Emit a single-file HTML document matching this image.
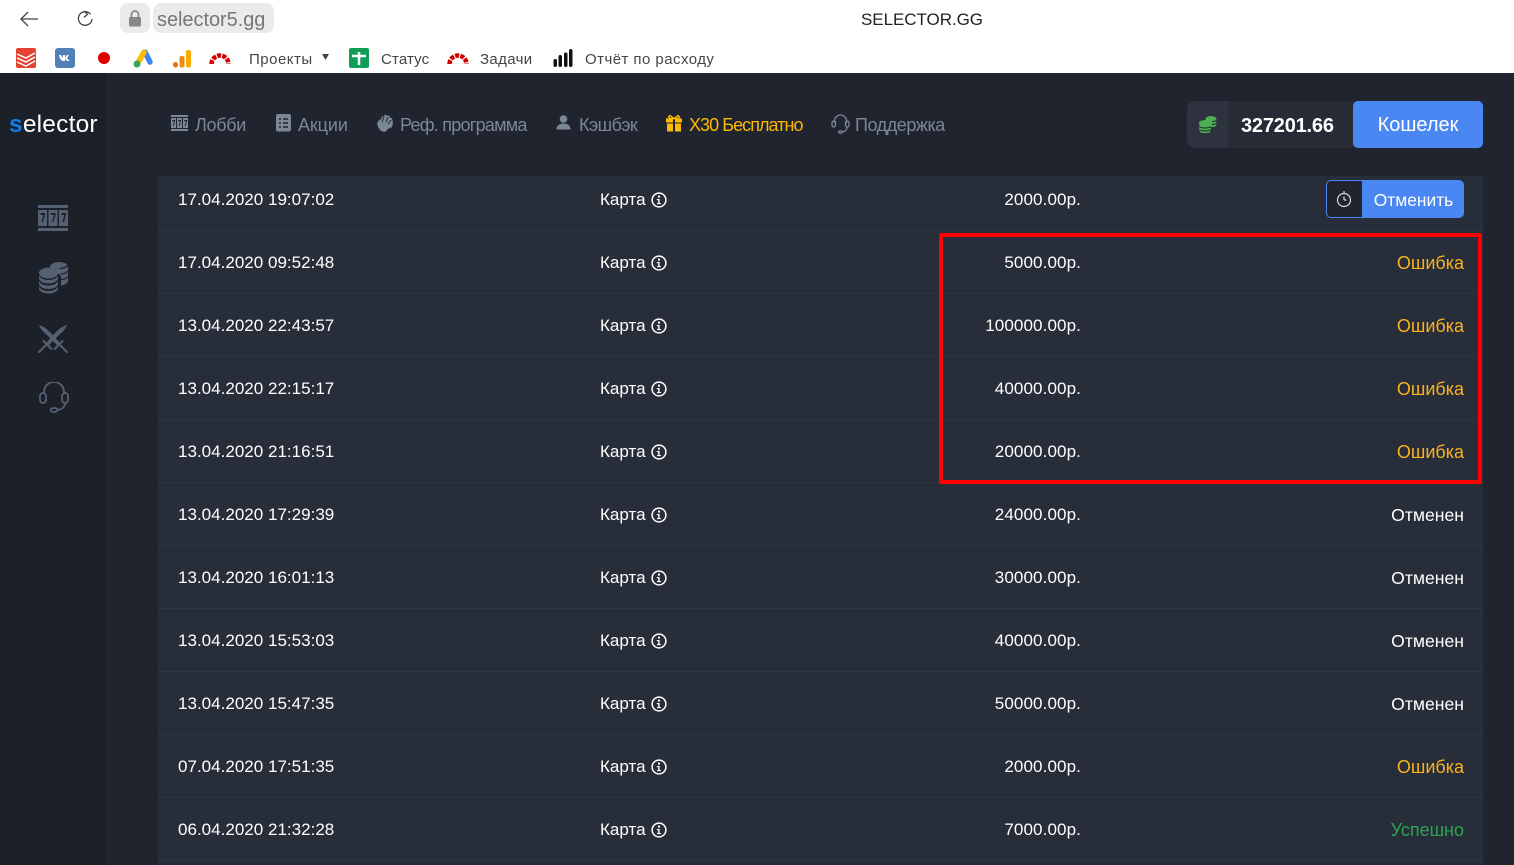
<!DOCTYPE html>
<html><head><meta charset="utf-8"><style>
html,body{margin:0;padding:0}
body{width:1514px;height:865px;overflow:hidden;position:relative;background:#20242e;font-family:"Liberation Sans",sans-serif}
.a{position:absolute;white-space:nowrap}
.top{left:0;top:0;width:1514px;height:73px;background:#fff}
.side{left:0;top:73px;width:106px;height:792px;background:#1c2029}
.bm{font-size:15px;color:#444;top:50px;letter-spacing:.5px;line-height:18px}
.nav{font-size:18px;color:#7b8794;top:114px;line-height:22px}
.table{left:158px;top:176px;width:1325px;height:689px;background:#272d39}
.line{left:158px;width:1325px;height:1px;background:#2f3541}
.t{font-size:17.05px;line-height:20px;color:#fff}
.amt{letter-spacing:.1px}
.r{text-align:right}
.or{color:#fbb21f;font-size:18px}
.wh{color:#fff;font-size:17.6px}
.gr{color:#2ea44f;font-size:18px}
</style></head><body>
<div class="a top"></div>
<div class="a side"></div>

<!-- browser chrome -->
<svg class="a" style="left:18px;top:8px" width="80" height="22" fill="none" stroke="#444" stroke-width="1.300"><path d="M20 11H3M10 4l-7 7 7 7"/><path d="M72.500 6.200A6.800 6.800 0 1 0 74 11"/><path d="M66 3l3.500 3.200L66 9.500"/></svg>
<div class="a" style="left:120px;top:3px;width:30px;height:30px;background:#ebebeb;border-radius:8px"></div>
<svg class="a" style="left:128px;top:10px" width="14" height="17"><path d="M3.500 7V4.500a3.500 3.500 0 0 1 7 0V7" fill="none" stroke="#888" stroke-width="1.700"/><rect x="1" y="7" width="12" height="9.500" rx="1.500" fill="#888"/></svg>
<div class="a" style="left:153px;top:3px;width:121px;height:30px;background:#ebebeb;border-radius:8px"></div>
<div class="a" style="left:157px;top:8px;font-size:20px;line-height:24px;color:#777;letter-spacing:-.05px">selector5.gg</div>
<div class="a" style="left:861px;top:8px;font-size:17px;line-height:24px;color:#222;letter-spacing:-.05px">SELECTOR.GG</div>

<svg class="a" style="left:16px;top:48px" width="21" height="20"><rect width="20" height="20" rx="2" fill="#e44332"/><path d="M1 6l9 4 9-5M1 10l9 4 9-5M1 14l9 4 9-5" fill="none" stroke="#fff" stroke-width="1.500"/></svg>
<svg class="a" style="left:55px;top:48px" width="20" height="20"><rect width="20" height="20" rx="3" fill="#5181b8"/><path d="M4 7h2l2 3V7h2v2.500L12 7h2l-2 3 2.500 3h-2.300L10 10.800V13H8.500C6 13 4.500 10 4 7z" fill="#fff"/></svg>
<div class="a" style="left:98px;top:52px;width:12px;height:12px;border-radius:50%;background:#e00000"></div>
<svg class="a" style="left:133px;top:49px" width="20" height="20"><path d="M12 3l5 10" stroke="#4285f4" stroke-width="5.500" stroke-linecap="round"/><path d="M11 3L6 12" stroke="#fbbc04" stroke-width="5.500" stroke-linecap="round"/><circle cx="4" cy="15" r="3.500" fill="#34a853"/></svg>
<svg class="a" style="left:172px;top:49px" width="20" height="20"><rect x="1" y="13" width="5" height="5.500" rx="2.500" fill="#e8710a"/><rect x="7.500" y="7" width="5" height="11.500" rx="2" fill="#ee8c12"/><rect x="14" y="1" width="5" height="17.500" rx="2" fill="#f9ab00"/></svg>
<svg class="a" style="left:209px;top:49px" width="22" height="18"><path d="M2.500 15A8.500 8.500 0 0 1 19.500 15" fill="none" stroke="#d40000" stroke-width="4.500" stroke-dasharray="4 1.200"/></svg>
<div class="a bm" style="left:249px;top:51px">Проекты</div>
<svg class="a" style="left:321px;top:53px" width="10" height="8"><path d="M1 1h7L4.500 7z" fill="#444"/></svg>
<svg class="a" style="left:349px;top:48px" width="20" height="20"><rect width="20" height="20" rx="2" fill="#0f9d58"/><path d="M3 8h14M10 4v13" stroke="#fff" stroke-width="2.500"/></svg>
<div class="a bm" style="left:381px;top:51px;letter-spacing:.15px">Статус</div>
<svg class="a" style="left:447px;top:49px" width="22" height="18"><path d="M2.500 15A8.500 8.500 0 0 1 19.500 15" fill="none" stroke="#d40000" stroke-width="4.500" stroke-dasharray="4 1.200"/></svg>
<div class="a bm" style="left:480px;top:51px;letter-spacing:.35px">Задачи</div>
<svg class="a" style="left:553px;top:49px" width="20" height="18"><g fill="#111"><rect x="0.500" y="10" width="3.500" height="8" rx="1.700"/><rect x="5.500" y="6" width="3.500" height="12" rx="1.700"/><rect x="11" y="3.500" width="3.500" height="14.500" rx="1.700"/><rect x="16" y="0" width="3.500" height="18" rx="1.700"/></g></svg>
<div class="a bm" style="left:585px;top:51px;letter-spacing:.45px">Отчёт по расходу</div>

<!-- logo -->
<div class="a" style="left:9px;top:110px;font-size:24.500px;line-height:30px;color:#fff;letter-spacing:.2px"><span style="color:#0d7fe8;font-weight:700">s</span>elector</div>

<!-- sidebar icons -->
<svg class="a" style="left:38px;top:205px" width="31" height="26" fill="#566073"><rect width="30" height="3"/><rect y="23" width="30" height="3"/><rect y="5" width="9" height="16"/><rect x="10.500" y="5" width="9" height="16"/><rect x="21" y="5" width="9" height="16"/><path d="M2.500 8h4.500v2l-2 7H3.500l2-7H2.500zM13 8h4.500v2l-2 7H14l2-7H13zM23.500 8h4.500v2l-2 7H24.500l2-7H23.500z" fill="#1c2029"/></svg>
<svg class="a" style="left:39px;top:262px" width="30" height="32"><g fill="#566073"><path d="M11 5c0-3 4-5 9-5s9 2 9 5v14c0 2-3 4-7 4.500V15c0-3-4-5-11-5z"/><ellipse cx="9.500" cy="11" rx="9.500" ry="5.500"/><path d="M0 13.500c1.500 3 5 4.500 9.500 4.500s8-1.500 9.500-4.500V17c-1.500 3-5 4.500-9.500 4.500S1.500 20 0 17zM0 19c1.500 3 5 4.500 9.500 4.500s8-1.500 9.500-4.500v3.500c-1.500 3-5 4.500-9.500 4.500S1.500 25.500 0 22.500zM0 24.500c1.500 3 5 4.500 9.500 4.500s8-1.500 9.500-4.500v2c0 3-4.500 5-9.500 5S0 29.500 0 26.500z"/></g><path d="M20.500 6.500c3 0 6-.8 8.500-3M22 12c3 0 5.500-1 7-3M22 17.500c3 0 5.500-1 7-3" fill="none" stroke="#1c2029" stroke-width="1.200"/></svg>
<svg class="a" style="left:38px;top:324px" width="30" height="30" fill="none" stroke="#566073" stroke-width="2"><path d="M1 1c4 1 8 4 11 7l10 11-2.500 2.500L9 11C5.500 8 2.500 5 1 1z" fill="#566073" stroke="none"/><path d="M29 1c-4 1-8 4-11 7L8 19l2.500 2.500L21 11c3.500-3 6.500-6 8-10z" fill="#566073" stroke="none"/><path d="M5.500 17l8 8M24.500 17l-8 8M1 28l6.500-6.500M29 28l-6.500-6.500" stroke-linecap="round"/></svg>
<svg class="a" style="left:39px;top:382px" width="30" height="32" fill="none" stroke="#566073" stroke-width="1.800"><path d="M5 12V10a10 10 0 0 1 20 0v2"/><rect x="1" y="11" width="6" height="10" rx="3"/><rect x="23" y="11" width="6" height="10" rx="3"/><path d="M26 21c0 4-3 6.500-8 7"/><ellipse cx="15" cy="28" rx="3.500" ry="2"/></svg>

<!-- nav -->
<svg class="a" style="left:171px;top:115px" width="18" height="16" fill="#7b8794"><rect width="17" height="2"/><rect y="14" width="17" height="2"/><rect y="3" width="5" height="10"/><rect x="6" y="3" width="5" height="10"/><rect x="12" y="3" width="5" height="10"/><path d="M1 5h3v1l-1.200 5H1.800L3 6H1zM7 5h3v1l-1.200 5H7.800L9 6H7zM13 5h3v1l-1.200 5H13.800L15 6H13z" fill="#20242e"/></svg>
<div class="a nav" style="left:195px;letter-spacing:-.3px">Лобби</div>
<svg class="a" style="left:276px;top:114px" width="15" height="18"><rect width="15" height="17.500" rx="2" fill="#7b8794"/><path d="M3 5h2M7 5h5M3 9h2M7 9h5M3 13h2M7 13h5" stroke="#20242e" stroke-width="1.400"/></svg>
<div class="a nav" style="left:298px;letter-spacing:-.1px">Акции</div>
<svg class="a" style="left:376px;top:114px" width="19" height="19" fill="#7b8794"><path d="M1 9l3-4 1 1 1-4 2 1 1-3 2 2 2-1 1 3 2 0 1 5-1 4-4 2-3 3-4-1-3-4z"/><path d="M8 3L6 8M12 3l-2 5M15 6l-3 4" stroke="#20242e"/></svg>
<div class="a nav" style="left:400px;letter-spacing:-.75px">Реф. программа</div>
<svg class="a" style="left:556px;top:115px" width="15" height="15" fill="#7b8794"><circle cx="7.500" cy="4" r="3.800"/><path d="M.5 14.500c0-4 3-6 7-6s7 2 7 6z"/></svg>
<div class="a nav" style="left:579px;letter-spacing:-.5px">Кэшбэк</div>
<svg class="a" style="left:666px;top:114px" width="16" height="18" fill="#ffb800"><rect y="4.500" width="16" height="4"/><rect x="1" y="9.500" width="14" height="8"/><path d="M7 4h2v14H7z" fill="#20242e"/><path d="M8 4.500L4 1.500 2.500 3 4 4.500zM8 4.500l4-3 1.500 1.500L12 4.500z" fill="none" stroke="#ffb800" stroke-width="1.400"/></svg>
<div class="a nav" style="left:689px;color:#ffb800;letter-spacing:-.95px">Х30 Бесплатно</div>
<svg class="a" style="left:831px;top:114px" width="19" height="20" fill="none" stroke="#7b8794" stroke-width="1.300"><path d="M3.500 9V7a6 6 0 0 1 12 0v2"/><rect x="1" y="7" width="3.500" height="6" rx="1.700"/><rect x="14.500" y="7" width="3.500" height="6" rx="1.700"/><path d="M16 13c0 3-2 4.500-5 5"/><ellipse cx="9.500" cy="18" rx="2" ry="1.200"/></svg>
<div class="a nav" style="left:855px;letter-spacing:-.45px">Поддержка</div>

<!-- balance -->
<div class="a" style="left:1187px;top:101px;width:190px;height:47px;background:#272b36;border-radius:8px"></div>
<div class="a" style="left:1187px;top:101px;width:41px;height:47px;background:#2d323e;border-radius:8px 0 0 8px"></div>
<svg class="a" style="left:1198px;top:115px" width="19" height="20"><g fill="#4caf50"><ellipse cx="13" cy="4" rx="5.500" ry="3"/><rect x="7.500" y="4" width="11" height="8" rx="3"/><ellipse cx="7" cy="8" rx="6" ry="3"/><rect x="1" y="8" width="12" height="10" rx="3.500"/></g><path d="M1 11.500c2 2 10 2 12 0M1 14.500c2 2 10 2 12 0M14 6.500c2 0 4-.5 4.500-1.500M14 9.500c2 0 4-.5 4.500-1.500" stroke="#272b36" fill="none"/></svg>
<div class="a" style="left:1241px;top:113px;font-size:20px;font-weight:700;line-height:26px;color:#fff;letter-spacing:-.2px">327201.66</div>
<div class="a" style="left:1353px;top:101px;width:130px;height:47px;background:#4b87f3;border-radius:5px;text-align:center;color:#fff;font-size:20px;line-height:49px">Кошелек</div>

<!-- table -->
<div class="a table"></div>
<div class="a line" style="top:230px"></div>
<div class="a line" style="top:293px"></div>
<div class="a line" style="top:356px"></div>
<div class="a line" style="top:419px"></div>
<div class="a line" style="top:482px"></div>
<div class="a line" style="top:545px"></div>
<div class="a line" style="top:608px"></div>
<div class="a line" style="top:671px"></div>
<div class="a line" style="top:734px"></div>
<div class="a line" style="top:797px"></div>
<div class="a line" style="top:860px"></div>

<svg width="0" height="0" style="position:absolute"><defs><g id="i"><circle cx="8" cy="8" r="6.900" fill="none" stroke="#fff" stroke-width="1.500"/><rect x="7" y="3.600" width="2" height="2" fill="#fff"/><path d="M5.800 7h2.800v4h1.300v1.100H6V11h1.200V8.100H5.800z" fill="#fff"/></g></defs></svg>

<div class="a t" style="left:178px;top:190px">17.04.2020 19:07:02</div><div class="a t" style="left:600px;top:190px">Карта</div><svg class="a" style="left:651px;top:192px" width="16" height="16"><use href="#i"/></svg><div class="a t r amt" style="right:433px;top:190px">2000.00р.</div>
<div class="a t" style="left:178px;top:253px">17.04.2020 09:52:48</div><div class="a t" style="left:600px;top:253px">Карта</div><svg class="a" style="left:651px;top:255px" width="16" height="16"><use href="#i"/></svg><div class="a t r amt" style="right:433px;top:253px">5000.00р.</div><div class="a t r or" style="right:50px;top:253px">Ошибка</div>
<div class="a t" style="left:178px;top:316px">13.04.2020 22:43:57</div><div class="a t" style="left:600px;top:316px">Карта</div><svg class="a" style="left:651px;top:318px" width="16" height="16"><use href="#i"/></svg><div class="a t r amt" style="right:433px;top:316px">100000.00р.</div><div class="a t r or" style="right:50px;top:316px">Ошибка</div>
<div class="a t" style="left:178px;top:379px">13.04.2020 22:15:17</div><div class="a t" style="left:600px;top:379px">Карта</div><svg class="a" style="left:651px;top:381px" width="16" height="16"><use href="#i"/></svg><div class="a t r amt" style="right:433px;top:379px">40000.00р.</div><div class="a t r or" style="right:50px;top:379px">Ошибка</div>
<div class="a t" style="left:178px;top:442px">13.04.2020 21:16:51</div><div class="a t" style="left:600px;top:442px">Карта</div><svg class="a" style="left:651px;top:444px" width="16" height="16"><use href="#i"/></svg><div class="a t r amt" style="right:433px;top:442px">20000.00р.</div><div class="a t r or" style="right:50px;top:442px">Ошибка</div>
<div class="a t" style="left:178px;top:505px">13.04.2020 17:29:39</div><div class="a t" style="left:600px;top:505px">Карта</div><svg class="a" style="left:651px;top:507px" width="16" height="16"><use href="#i"/></svg><div class="a t r amt" style="right:433px;top:505px">24000.00р.</div><div class="a t r wh" style="right:50px;top:505px">Отменен</div>
<div class="a t" style="left:178px;top:568px">13.04.2020 16:01:13</div><div class="a t" style="left:600px;top:568px">Карта</div><svg class="a" style="left:651px;top:570px" width="16" height="16"><use href="#i"/></svg><div class="a t r amt" style="right:433px;top:568px">30000.00р.</div><div class="a t r wh" style="right:50px;top:568px">Отменен</div>
<div class="a t" style="left:178px;top:631px">13.04.2020 15:53:03</div><div class="a t" style="left:600px;top:631px">Карта</div><svg class="a" style="left:651px;top:633px" width="16" height="16"><use href="#i"/></svg><div class="a t r amt" style="right:433px;top:631px">40000.00р.</div><div class="a t r wh" style="right:50px;top:631px">Отменен</div>
<div class="a t" style="left:178px;top:694px">13.04.2020 15:47:35</div><div class="a t" style="left:600px;top:694px">Карта</div><svg class="a" style="left:651px;top:696px" width="16" height="16"><use href="#i"/></svg><div class="a t r amt" style="right:433px;top:694px">50000.00р.</div><div class="a t r wh" style="right:50px;top:694px">Отменен</div>
<div class="a t" style="left:178px;top:757px">07.04.2020 17:51:35</div><div class="a t" style="left:600px;top:757px">Карта</div><svg class="a" style="left:651px;top:759px" width="16" height="16"><use href="#i"/></svg><div class="a t r amt" style="right:433px;top:757px">2000.00р.</div><div class="a t r or" style="right:50px;top:757px">Ошибка</div>
<div class="a t" style="left:178px;top:820px">06.04.2020 21:32:28</div><div class="a t" style="left:600px;top:820px">Карта</div><svg class="a" style="left:651px;top:822px" width="16" height="16"><use href="#i"/></svg><div class="a t r amt" style="right:433px;top:820px">7000.00р.</div><div class="a t r gr" style="right:50px;top:820px">Успешно</div>

<!-- cancel button -->
<div class="a" style="left:1326px;top:180px;width:36px;height:36px;border:1px solid #4b87f3;border-right:0;border-radius:5px 0 0 5px;background:#20242e"></div>
<svg class="a" style="left:1336px;top:190px" width="16" height="18" fill="none" stroke="#d8dade" stroke-width="1.200"><circle cx="8" cy="10" r="6.500"/><path d="M8 1v3M8 10V6.500M8 10h2.500"/></svg>
<div class="a" style="left:1362px;top:180px;width:102px;height:38px;background:#4b87f3;border-radius:0 5px 5px 0;color:#fff;font-size:17.400px;line-height:40px;text-align:center;text-indent:1px">Отменить</div>

<!-- red highlight -->
<div class="a" style="left:939px;top:233px;width:535px;height:243px;border:4px solid #f00;border-radius:2px"></div>
</body></html>
